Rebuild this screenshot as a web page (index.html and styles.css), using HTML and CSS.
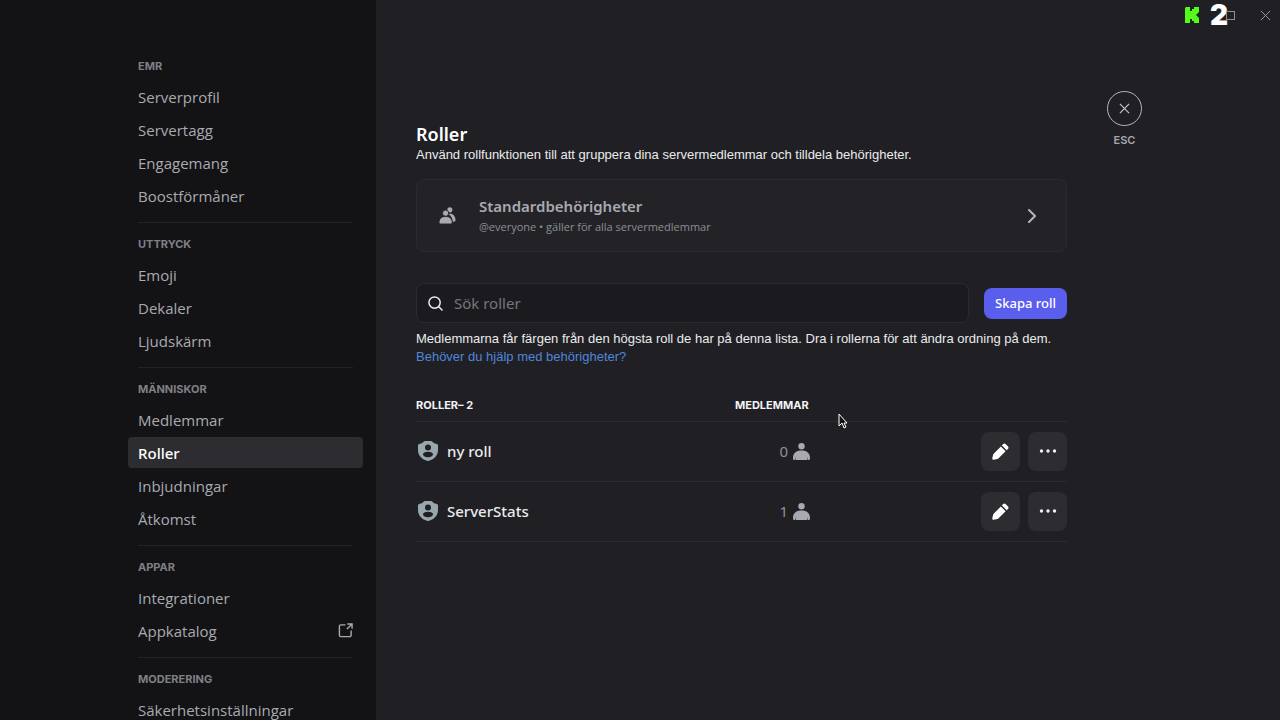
FILE: index.html
```html
<!DOCTYPE html>
<html lang="sv">
<head>
    <meta charset="UTF-8">
    <meta name="viewport" content="width=device-width, initial-scale=1.0">
    <title>Roller</title>
    <link rel="stylesheet" href="styles.css">
</head>
<body>
    <svg class="sprite" aria-hidden="true">
        <symbol id="person" viewBox="0 0 16 16">
            <circle cx="8" cy="3" r="3" />
            <path d="M0 14C0 9.500 3 7 8 7s8 2.500 8 7c0 1-.4 2-1 2h-.8l-.6-3v3H2.400v-3l-.6 3H1c-.6 0-1-1-1-2z" />
        </symbol>
        <symbol id="shield" viewBox="0 0 20 20">
            <path class="shield-body" d="M7 0h6c.6 0 1 .2 1.400.7.8 1 2 1.800 3.600 2 1 .1 2 .6 2 1.800V9c0 5.500-3.500 9-9 10.800a3 3 0 0 1-2 0C3.500 18 0 14.500 0 9V4.500c0-1.200 1-1.700 2-1.800 1.600-.2 2.800-1 3.600-2C6 .2 6.400 0 7 0z" />
            <circle class="shield-cut" cx="10" cy="6.500" r="3" />
            <path class="shield-cut" d="M5 13.500c0-2 2-2.800 5-2.800s5 .8 5 2.800c0 1.600-2.600 2.800-5 2.800s-5-1.200-5-2.800z" />
        </symbol>
        <symbol id="pencil" viewBox="0 0 18 18">
            <path d="M11.700 1.200a2 2 0 0 1 2.800 0l2.300 2.300a2 2 0 0 1 0 2.800l-1.300 1.300-5.100-5.100z" />
            <path d="M9.400 3.700l5 5-7.400 7.400c-.4.400-.8.700-1.400.8l-3.700.8c-1 .2-1.800-.6-1.600-1.600l.9-3.700c.1-.5.4-1 .8-1.400z" />
        </symbol>
        <symbol id="dots" viewBox="0 0 18 4">
            <circle cx="2.500" cy="2" r="1.700" />
            <circle cx="9" cy="2" r="1.700" />
            <circle cx="15.500" cy="2" r="1.700" />
        </symbol>
    </svg>

    <div class="layout">
        <nav class="sidebar" aria-label="Serverinställningar">
            <section class="nav-section">
                <h2>EMR</h2>
                <a href="#">Serverprofil</a>
                <a href="#">Servertagg</a>
                <a href="#">Engagemang</a>
                <a href="#">Boostförmåner</a>
            </section>
            <section class="nav-section">
                <h2>UTTRYCK</h2>
                <a href="#">Emoji</a>
                <a href="#">Dekaler</a>
                <a href="#">Ljudskärm</a>
            </section>
            <section class="nav-section">
                <h2>MÄNNISKOR</h2>
                <a href="#">Medlemmar</a>
                <a href="#" class="selected">Roller</a>
                <a href="#">Inbjudningar</a>
                <a href="#">Åtkomst</a>
            </section>
            <section class="nav-section">
                <h2>APPAR</h2>
                <a href="#">Integrationer</a>
                <a href="#">Appkatalog
                    <svg class="icon-external" viewBox="0 0 16 16" aria-hidden="true">
                        <path d="M8 2H3a1.500 1.500 0 0 0-1.500 1.500v9.500A1.500 1.500 0 0 0 3 14.500h9.500A1.500 1.500 0 0 0 14 13V8M10 1h5v5M15 1L9.500 6.500" />
                    </svg>
                </a>
            </section>
            <section class="nav-section">
                <h2>MODERERING</h2>
                <a href="#">Säkerhetsinställningar</a>
            </section>
        </nav>

        <div class="content">
            <main class="page">
                <h1>Roller</h1>
                <p>Använd rollfunktionen till att gruppera dina servermedlemmar och tilldela behörigheter.</p>

                <button type="button" class="default-card">
                    <svg class="icon-people" viewBox="0 0 18 18" aria-hidden="true">
                        <circle cx="11.500" cy="3" r="2.700" />
                        <path d="M12 7c3.500.6 5.500 3.300 5.500 7 0 1-.6 1.500-1.500 1.500h-1.500C14 12 13 9.500 10.500 8z" />
                        <circle class="people-front" cx="7" cy="6.500" r="3.300" />
                        <path class="people-front" d="M0 16.500C0 12.500 2.500 10 7 10s7 2.500 7 6.500c0 .8-.5 1.500-1.300 1.500H1.300C.5 18 0 17.300 0 16.500z" />
                    </svg>
                    <span class="card-text">
                        <span class="card-title">Standardbehörigheter</span>
                        <span class="card-sub">@everyone • gäller för alla servermedlemmar</span>
                    </span>
                    <svg class="icon-chevron" viewBox="0 0 8 14" aria-hidden="true"><path d="M1 1l6 6-6 6" /></svg>
                </button>

                <div class="toolbar">
                    <div class="search">
                        <svg class="icon-search" viewBox="0 0 16 16" aria-hidden="true"><circle cx="7" cy="7" r="6" /><path d="M11.500 11.500l3.500 3.500" /></svg>
                        <input type="text" id="search" placeholder="Sök roller" aria-label="Sök roller">
                    </div>
                    <button type="button" class="create">Skapa roll</button>
                </div>

                <p>Medlemmarna får färgen från den högsta roll de har på denna lista. Dra i rollerna för att ändra ordning på dem.</p>
                <a href="#" class="help">Behöver du hjälp med behörigheter?</a>

                <table class="roles">
                    <thead>
                        <tr>
                            <th class="col-role" scope="col">ROLLER– 2</th>
                            <th class="col-members" scope="col">MEDLEMMAR</th>
                            <td></td>
                        </tr>
                    </thead>
                    <tbody>
                        <tr>
                            <td><div class="role"><svg class="icon-shield" aria-hidden="true"><use href="#shield" /></svg>ny roll</div></td>
                            <td><div class="members">0<svg class="icon-person" aria-hidden="true"><use href="#person" /></svg></div></td>
                            <td>
                                <div class="actions">
                                    <button type="button" aria-label="Redigera"><svg class="icon-pencil"><use href="#pencil" /></svg></button>
                                    <button type="button" aria-label="Mer"><svg class="icon-dots"><use href="#dots" /></svg></button>
                                </div>
                            </td>
                        </tr>
                        <tr>
                            <td><div class="role"><svg class="icon-shield" aria-hidden="true"><use href="#shield" /></svg>ServerStats</div></td>
                            <td><div class="members">1<svg class="icon-person" aria-hidden="true"><use href="#person" /></svg></div></td>
                            <td>
                                <div class="actions">
                                    <button type="button" aria-label="Redigera"><svg class="icon-pencil"><use href="#pencil" /></svg></button>
                                    <button type="button" aria-label="Mer"><svg class="icon-dots"><use href="#dots" /></svg></button>
                                </div>
                            </td>
                        </tr>
                    </tbody>
                </table>
            </main>

            <div class="close">
                <button type="button" aria-label="Stäng">
                    <svg viewBox="0 0 12 12" aria-hidden="true"><path d="M1 1l10 10M11 1L1 11" /></svg>
                </button>
                <span>ESC</span>
            </div>
        </div>
    </div>

    <!-- Window controls with the stream counter on top -->
    <div class="window-bar">
        <svg class="kick" viewBox="0 0 14 16" aria-hidden="true"><path d="M1 0h4v4h2V2h2V0h5v5l-2 2-1 1 1 1 2 2v5H9v-2H7v-2H5v4H0V1z" /></svg>
        <span class="viewers">2</span>
        <button type="button" class="maximize" aria-label="Maximera"></button>
        <button type="button" class="close-window" aria-label="Stäng fönster">
            <svg viewBox="0 0 12 12" aria-hidden="true"><path d="M1 1l10 10M11 1L1 11" /></svg>
        </button>
    </div>

    <svg class="cursor" viewBox="0 0 10 16" aria-hidden="true"><path d="M1 1v12l3-3 2 5 2-1-2-4h3z" /></svg>
</body>
</html>
```
FILE: styles.css
```css
* { box-sizing: border-box; }
body { margin: 0; font-family: "Noto Sans", sans-serif; font-size: 13px; color: #ebebed; background: #202024; overflow: hidden; }
h1, h2, p { margin: 0; }
a { text-decoration: none; }
button { font: inherit; color: inherit; border: none; padding: 0; cursor: pointer; }
svg { flex-shrink: 0; }
.sprite { display: none; }

.layout { display: grid; grid-template-columns: 47fr 113fr; height: 100vh; }

/* Sidebar */
.sidebar { background: #131316; padding: 56px 13px 0 0; overflow: hidden; display: flex; flex-direction: column; align-items: flex-end; }
.nav-section { width: 235px; display: flex; flex-direction: column; gap: 2px; flex-shrink: 0; }
.nav-section + .nav-section::before { content: ""; height: 1px; margin: 11px 10px 9px; background: #222226; }
.nav-section h2 { font-family: Inter, sans-serif; font-size: 11px; line-height: 20px; font-weight: 700; color: #7f8085; padding: 0 10px; margin-bottom: 3px; }
.nav-section a { display: flex; align-items: center; justify-content: space-between; height: 31px; padding: 0 10px; border-radius: 4px; font-family: "Open Sans", sans-serif; font-size: 15px; color: #a9aab0; }
.nav-section a.selected { background: #2c2c31; color: #fff; font-family: "Noto Sans", sans-serif; font-weight: 500; }
.icon-external { width: 15px; height: 15px; fill: none; stroke: #a9aab0; stroke-width: 1.5; }

/* Content */
.content { display: flex; align-items: flex-start; gap: 40px; padding: 91px 138px 0 40px; }
.page { flex: 1; min-width: 0; padding-top: 32px; }
h1 { font-size: 18px; line-height: 23px; font-weight: 600; color: #fff; }
p, .help { font-family: "Liberation Sans", sans-serif; font-size: 13px; line-height: 18px; }
.help { display: block; color: #4e86db; }

.default-card { display: flex; align-items: center; width: 100%; height: 73px; margin: 15px 0 31px; padding: 0 30px 0 22px; border: 1px solid #2a2a2f; border-radius: 8px; background: #232327; text-align: left; color: #a9aab0; }
.icon-people { width: 17px; height: 17px; fill: #a9aab0; }
.people-front { stroke: #232327; stroke-width: 1; }
.card-text { flex: 1; display: flex; flex-direction: column; padding-left: 23px; }
.card-title { font-size: 15px; line-height: 22px; font-weight: 600; }
.card-sub { font-family: "Open Sans", sans-serif; font-size: 11px; line-height: 20px; color: #8c8d93; }
.icon-chevron { width: 8px; height: 14px; fill: none; stroke: #b4b5ba; stroke-width: 2; stroke-linecap: round; stroke-linejoin: round; }

.toolbar { display: flex; align-items: center; gap: 15px; margin-bottom: 7px; }
.search { flex: 1; display: flex; align-items: center; gap: 11px; height: 40px; padding: 0 11px; border: 1px solid #2a2a2f; border-radius: 8px; background: #1b1b1f; }
.icon-search { width: 15px; height: 15px; fill: none; stroke: #ebebed; stroke-width: 1.6; stroke-linecap: round; }
.search input { flex: 1; min-width: 0; border: none; outline: none; padding: 0; background: none; color: #ebebed; font: inherit; font-size: 15px; }
.search input::placeholder { color: #75767b; }
.create { height: 31px; padding: 0 11px; border-radius: 8px; background: #5a5eec; color: #fff; font-size: 13px; font-weight: 500; }

/* Role list */
.roles { width: 100%; margin-top: 23px; border-collapse: collapse; table-layout: fixed; }
.roles tr { border-bottom: 1px solid #2c2c31; }
.roles th, .roles td { padding: 0; text-align: left; }
.roles th { height: 32px; font-family: Inter, sans-serif; font-size: 11px; font-weight: 700; color: #f4f4f6; }
.roles tbody td { height: 60px; }
.col-role { width: 49%; }
.col-members { width: 12%; }
.role { display: flex; align-items: center; gap: 9px; padding-left: 2px; font-size: 15px; font-weight: 500; }
.icon-shield { width: 20px; height: 20px; }
.shield-body { fill: #98a7ab; }
.shield-cut { fill: #202024; }
.members { display: flex; align-items: center; justify-content: flex-end; gap: 5px; padding-right: 3px; font-size: 15px; color: #8f9096; }
.icon-person { width: 17px; height: 17px; fill: #a9aab0; }
.actions { display: flex; justify-content: flex-end; gap: 8px; }
.actions button { display: flex; align-items: center; justify-content: center; width: 39px; height: 39px; border-radius: 8px; background: #2d2d31; }
.icon-pencil { width: 17px; height: 17px; fill: #fff; }
.icon-dots { width: 18px; height: 4px; fill: #f0f0f2; }

/* Close button */
.close { width: 35px; display: flex; flex-direction: column; align-items: center; gap: 5px; font-family: Inter, sans-serif; font-size: 11px; line-height: 18px; font-weight: 600; color: #a4a5aa; }
.close button { display: flex; align-items: center; justify-content: center; width: 35px; height: 35px; border: 1px solid #b4b5ba; border-radius: 50%; background: none; }
.close svg { width: 11px; height: 11px; fill: none; stroke: #c4c5c9; stroke-width: 1.3; }

.window-bar { position: absolute; top: 0; right: 9px; height: 30px; display: flex; align-items: center; }
.kick { width: 14px; height: 16px; fill: #53fc18; margin-right: 11px; }
.viewers { font-family: Inter, sans-serif; font-size: 28px; line-height: 30px; font-weight: 900; color: #fff; margin-right: -2px; }
.maximize { width: 9px; height: 9px; border: 1px solid #8d8e92; background: none; margin-right: 25px; }
.close-window { display: flex; background: none; }
.close-window svg { width: 11px; height: 11px; fill: none; stroke: #a4a5aa; stroke-width: 1; }
.cursor { position: absolute; left: 838px; top: 413px; width: 10px; height: 16px; fill: #131316; stroke: #fff; stroke-width: 1; }
```
